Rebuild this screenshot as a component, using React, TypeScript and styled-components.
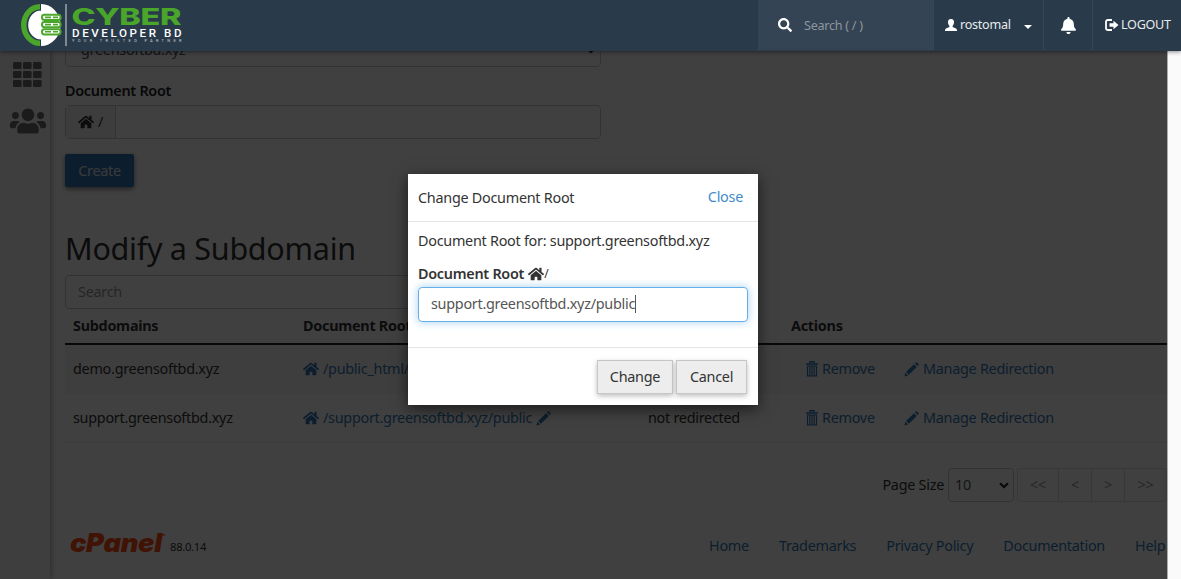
import React from "react";
import styled, { createGlobalStyle } from "styled-components";
import { FaBell, FaHome, FaSearch, FaUsers } from "react-icons/fa";

const Global = createGlobalStyle`
  * { box-sizing: border-box; }
  body { margin: 0; overflow: hidden; }
`;

const Page = styled.div`
  position: relative;
  display: flex;
  flex-direction: column;
  width: 1181px;
  height: 579px;
  overflow: hidden;
  background: #fafafa;
  color: #333;
  font: 14.4px/20px "Noto Sans", "Open Sans", sans-serif;
  letter-spacing: -0.27px;
`;

const Header = styled.header`
  position: relative;
  z-index: 3;
  flex: none;
  display: flex;
  height: 51px;
  background: #293a4a;
  color: #fff;
  font-size: 12.6px;
  box-shadow: 0 1px 4px rgba(0, 0, 0, 0.45);
`;

const Brand = styled.div`
  width: 758px;
  padding-left: 20px;
`;

const HeaderSearch = styled.div`
  display: flex;
  align-items: center;
  width: 175px;
  height: 50px;
  padding: 2px 0 0 20px;
  gap: 12px;
  background: #354454;
  color: #8e969e;
  svg { color: #fff; margin-top: -3px; }
`;

const HeaderItem = styled.div<{ $w: number; $pad: number; $gap?: number }>`
  display: flex;
  align-items: center;
  width: ${(p) => p.$w}px;
  height: 50px;
  padding-left: ${(p) => p.$pad}px;
  gap: ${(p) => p.$gap ?? 0}px;
  border-left: 1px solid #354656;
  white-space: nowrap;
  color: #e8ebed;
  svg { flex: none; color: #fff; }
`;

const Caret = styled.i`
  margin: 3px 0 0 10px;
  border: 4px solid transparent;
  border-top-color: #fff;
  border-bottom: 0;
`;

const Body = styled.div`
  display: flex;
  height: 528px;
`;

const Sidebar = styled.nav`
  position: relative;
  z-index: 1;
  flex: none;
  display: flex;
  flex-direction: column;
  align-items: center;
  gap: 16px;
  width: 50px;
  padding: 11px 0 0 5px;
  background: #f7f7f7;
  color: #6e6e6e;
  box-shadow: 1px 0 5px rgba(0, 0, 0, 0.35);
`;

const Main = styled.main`
  width: 1117px;
  height: 528px;
  padding-left: 15px;
  background: #fff;
  overflow: hidden;
`;

const Gutter = styled.div`
  flex: 1;
  border-left: 1px solid #aaa;
  background: #fafafa;
`;

const SelectBox = styled.div`
  width: 536px;
  height: 34px;
  margin-top: -18px;
  padding: 6px 4px 6px 15px;
  display: flex;
  justify-content: space-between;
  border: 1px solid #ccc;
  border-radius: 4px;
  color: #555;
  svg { margin-top: 7px; }
`;

const Label = styled.div`
  height: 20px;
  margin: 14px 0 4px;
  font-weight: 600;
  color: #222;
`;

const InputGroup = styled.div`
  display: flex;
  width: 536px;
  height: 34px;
  border: 1px solid #ccc;
  border-radius: 4px;
`;

const Addon = styled.div`
  display: flex;
  align-items: center;
  gap: 4px;
  width: 50px;
  padding-left: 12px;
  border-right: 1px solid #ccc;
  background: #f3f3f3;
`;

const Create = styled.button`
  display: block;
  width: 69px;
  height: 33px;
  margin: 15px 0 0;
  padding: 0;
  border: 0;
  border-radius: 2px;
  background: #337ab7;
  color: #e4e4e4;
  font: inherit;
  letter-spacing: inherit;
  box-shadow: 0 2px 5px rgba(0, 0, 0, 0.5);
`;

const Heading = styled.h2`
  margin: 41px 0 7px;
  height: 40px;
  font-size: 30.5px;
  font-weight: 400;
  line-height: 40px;
  white-space: nowrap;
`;

const TableSearch = styled.div`
  width: 536px;
  height: 34px;
  padding: 6px 12px;
  border: 1px solid #ccc;
  border-radius: 4px;
  color: #999;
`;

const Row = styled.div<{ $head?: boolean; $shade?: boolean }>`
  display: grid;
  grid-template-columns: 230px 345px 143px 1fr;
  align-items: center;
  height: ${(p) => (p.$head ? 36 : 49)}px;
  padding: ${(p) => (p.$head ? "0 8px 1px" : "0 8px")};
  white-space: nowrap;
  font-weight: ${(p) => (p.$head ? 700 : 400)};
  border-bottom: ${(p) => (p.$head ? "2px solid #222" : "1px solid #ececec")};
  background: ${(p) => (p.$shade ? "#f6f6f6" : "#fff")};
  &:nth-of-type(6) { border-bottom-color: transparent; }
`;

const Link = styled.a<{ $w?: number }>`
  display: inline-flex;
  align-items: center;
  gap: 4px;
  width: ${(p) => (p.$w ? p.$w + "px" : "auto")};
  color: #337ab7;
  svg { flex: none; }
`;

const Actions = styled.div`
  display: flex;
  padding-left: 15px;
`;

const Pager = styled.div`
  display: flex;
  align-items: center;
  justify-content: flex-end;
  height: 34px;
  margin-top: 25px;
`;

const PageSize = styled.div`
  display: flex;
  align-items: center;
  justify-content: space-between;
  width: 66px;
  height: 34px;
  margin: 0 3px 0 4px;
  padding: 0 4px 0 6px;
  border: 1px solid #ccc;
  border-radius: 4px;
  color: #555;
`;

const PageButtons = styled.div`
  display: grid;
  grid-template-columns: 40px 33px 33px 42px;
  width: 150px;
  height: 34px;
  line-height: 31px;
  text-align: center;
  color: #999;
  border: 1px solid #ddd;
  border-radius: 4px;
  span + span { border-left: 1px solid #ddd; }
`;

const Footer = styled.footer`
  display: flex;
  align-items: center;
  height: 40px;
  margin-top: 24px;
  padding-left: 5px;
`;

const Version = styled.span`
  flex: none;
  width: 544px;
  padding: 2px 0 0 5px;
  font-size: 11.2px;
`;

const FooterLinks = styled.div`
  display: flex;
  white-space: nowrap;
  gap: 30px;
`;

const Overlay = styled.div`
  position: absolute;
  z-index: 2;
  inset: 51px 14px 0 0;
  background: rgba(0, 0, 0, 0.75);
`;

const Modal = styled.section`
  width: 350px;
  height: 231px;
  margin: 123px 0 0 408px;
  background: #fff;
  box-shadow: 0 4px 14px rgba(0, 0, 0, 0.6);
`;

const ModalHead = styled.div`
  display: flex;
  justify-content: space-between;
  height: 48px;
  padding: 13px 15px 0 10px;
  border-bottom: 1px solid #e5e5e5;
  span { padding-top: 1px; }
  a { color: #428bca; }
`;

const ModalBody = styled.div`
  height: 126px;
  padding: 9px 10px 0;
  border-bottom: 1px solid #e5e5e5;
  white-space: nowrap;
`;

const FieldLabel = styled.div`
  display: flex;
  align-items: center;
  height: 20px;
  margin: 13px 0 3px;
  font-weight: 600;
  svg { margin-left: 4px; }
  small { font-size: 12px; font-weight: 400; }
`;

const Field = styled.div`
  display: flex;
  align-items: center;
  width: 330px;
  height: 35px;
  padding: 0 0 1px 12px;
  border: 1px solid #66afe9;
  border-radius: 4px;
  color: #555;
  box-shadow: 0 0 8px rgba(102, 175, 233, 0.6);
`;

const Cursor = styled.i`
  width: 1px;
  height: 18px;
  margin: -1px 0 0 0;
  background: #555;
`;

const ModalFoot = styled.div`
  display: flex;
  justify-content: flex-end;
  gap: 3px;
  padding: 12px 11px 0 0;
`;

const ModalButton = styled.button<{ $w: number }>`
  width: ${(p) => p.$w}px;
  height: 34px;
  padding: 0 0 1px;
  border: 1px solid #c6c6c6;
  background: #ededed;
  color: #333;
  font: inherit;
  letter-spacing: inherit;
  box-shadow: 0 2px 5px rgba(0, 0, 0, 0.26);
`;

const BrandLogo = () => (
  <svg width="166" height="50" viewBox="0 0 166 50">
    <path d="M20 4A19 21 0 0 0 20 46V40.5A13.5 15.5 0 0 1 20 9.5Z" fill="#4aa52b" />
    <path d="M21 10.5A12.8 14.5 0 0 0 21 39.5ZM21 4A19.5 21 0 0 1 21 46Z" fill="#fff" />
    {[14.8, 22, 29.2].map((y) => (
      <g key={y}>
        <rect x="22" y={y} width="18.6" height="5.2" rx="2.4" fill="#fff" stroke="#4aa52b" strokeWidth="2" />
        <path d={`M25 ${y + 2.6}H31M33 ${y + 2.6}H38`} stroke="#4aa52b" strokeWidth="1.6" />
      </g>
    ))}
    <path d="M46 4V46" stroke="#d5dade" strokeWidth="1" />
    <text x="51.5" y="25" fontFamily="Inter, sans-serif" fontWeight="800" fontSize="23" fill="#4aa52b" textLength="109.5" lengthAdjust="spacingAndGlyphs">CYBER</text>
    <text x="52" y="37" fontFamily="Roboto, sans-serif" fontWeight="500" fontSize="11.6" fill="#fff" letterSpacing="0" textLength="109.5" lengthAdjust="spacing">DEVELOPER BD</text>
    <text x="52" y="42" fontFamily="Roboto, sans-serif" fontSize="4" fill="#cbd1d6" letterSpacing="0" textLength="109.5" lengthAdjust="spacing">YOUR TRUSTED PARTNER</text>
  </svg>
);

const PanelLogo = () => (
  <svg width="95" height="32" viewBox="0 -4 95 32">
    <text x="0" y="18" fontFamily="Inter, sans-serif" fontStyle="italic" fontWeight="900" fontSize="26" fill="#ff4d13" textLength="92" lengthAdjust="spacingAndGlyphs">cPanel</text>
    <circle cx="94" cy="1" r="1" fill="#ff6c2c" />
  </svg>
);

const GridIcon = () => (
  <svg width="29" height="25" viewBox="0 0 29 25" fill="currentColor">
    {[0, 9, 18].map((y) => [0, 10, 20].map((x) => <rect key={`${x}-${y}`} x={x} y={y} width="8.6" height="7" rx="1.2" />))}
  </svg>
);

const Pencil = () => (
  <svg width="15" height="15" viewBox="0 0 15 15" fill="currentColor">
    <path d="M10.8 1.3 11.7.5Q12.3 0 13 .6L14.4 2Q15 2.6 14.4 3.2L13.6 4ZM10 2.2 12.8 5 4.9 12.8 2.1 10ZM1.4 10.8 4.1 13.5.4 14.6Z" />
  </svg>
);

const Trash = () => (
  <svg width="12" height="16" viewBox="0 0 12 16" fill="none" stroke="currentColor">
    <path d="M4 2V.7H8V2M0 3H12" strokeWidth="1.4" />
    <path d="M1.5 5V14.8H10.5V5M3.8 5V14M6 5V14M8.2 5V14M1 5H11" strokeWidth="1.2" />
  </svg>
);

const Person = () => (
  <svg width="12" height="12" viewBox="0 0 12 12" fill="currentColor">
    <path d="M6 0C8.3 0 9.2 1.5 9 3.6 8.9 5.3 8.2 6.2 7.6 7V8L11 9.6Q12 10.1 12 12H0Q0 10.1 1 9.6L4.4 8V7C3.8 6.2 3.1 5.3 3 3.6 2.8 1.5 3.7 0 6 0Z" />
  </svg>
);

const Logout = () => (
  <svg width="14" height="12" viewBox="0 0 14 12">
    <path d="M7 1H3Q1 1 1 3V9Q1 11 3 11H7" fill="none" stroke="currentColor" strokeWidth="1.8" />
    <path d="M4.5 4.3H8.5V1.7L13.5 6 8.5 10.3V7.7H4.5Z" fill="currentColor" />
  </svg>
);

const Chevron = () => (
  <svg width="10" height="7" viewBox="0 0 10 7" fill="none" stroke="#222" strokeWidth="2">
    <path d="M1 1.2 5 5 9 1.2" />
  </svg>
);

const domains = [
  { name: "demo.greensoftbd.xyz", root: "/public_html/demo" },
  { name: "support.greensoftbd.xyz", root: "/support.greensoftbd.xyz/public" },
];

export default function App() {
  return (
    <Page>
      <Global />
      <Header>
        <Brand><BrandLogo /></Brand>
        <HeaderSearch><FaSearch size={14} />Search ( / )</HeaderSearch>
        <HeaderItem $w={110} $pad={11} $gap={3}><Person />rostomal<Caret /></HeaderItem>
        <HeaderItem $w={49} $pad={16}><FaBell size={17} /></HeaderItem>
        <HeaderItem $w={89} $pad={12} $gap={2}><Logout />LOGOUT</HeaderItem>
      </Header>
      <Body>
        <Sidebar><GridIcon /><FaUsers size={36} /></Sidebar>
        <Main>
          <SelectBox>greensoftbd.xyz<Chevron /></SelectBox>
          <Label>Document Root</Label>
          <InputGroup><Addon><FaHome size={16} />/</Addon></InputGroup>
          <Create>Create</Create>
          <Heading>Modify a Subdomain</Heading>
          <TableSearch>Search</TableSearch>
          <Row $head><span>Subdomains</span><span>Document Root</span><span>Redirection</span><span>Actions</span></Row>
          {domains.map((d, i) => (
            <Row key={d.name} $shade={i === 0}>
              <span>{d.name}</span>
              <Link><FaHome size={16} />{d.root}<Pencil /></Link>
              <span>not redirected</span>
              <Actions>
                <Link $w={98}><Trash />Remove</Link>
                <Link><Pencil />Manage Redirection</Link>
              </Actions>
            </Row>
          ))}
          <Pager>
            Page Size
            <PageSize>10<Chevron /></PageSize>
            <PageButtons><span>&lt;&lt;</span><span>&lt;</span><span>&gt;</span><span>&gt;&gt;</span></PageButtons>
          </Pager>
          <Footer>
            <PanelLogo />
            <Version>88.0.14</Version>
            <FooterLinks>
              {["Home", "Trademarks", "Privacy Policy", "Documentation", "Help"].map((t) => <Link key={t}>{t}</Link>)}
            </FooterLinks>
          </Footer>
        </Main>
        <Gutter />
      </Body>
      <Overlay>
        <Modal>
          <ModalHead><span>Change Document Root</span><a>Close</a></ModalHead>
          <ModalBody>
            Document Root for: support.greensoftbd.xyz
            <FieldLabel>Document Root<FaHome size={16} /><small>/</small></FieldLabel>
            <Field>support.greensoftbd.xyz/public<Cursor /></Field>
          </ModalBody>
          <ModalFoot>
            <ModalButton $w={76}>Change</ModalButton>
            <ModalButton $w={71}>Cancel</ModalButton>
          </ModalFoot>
        </Modal>
      </Overlay>
    </Page>
  );
}
